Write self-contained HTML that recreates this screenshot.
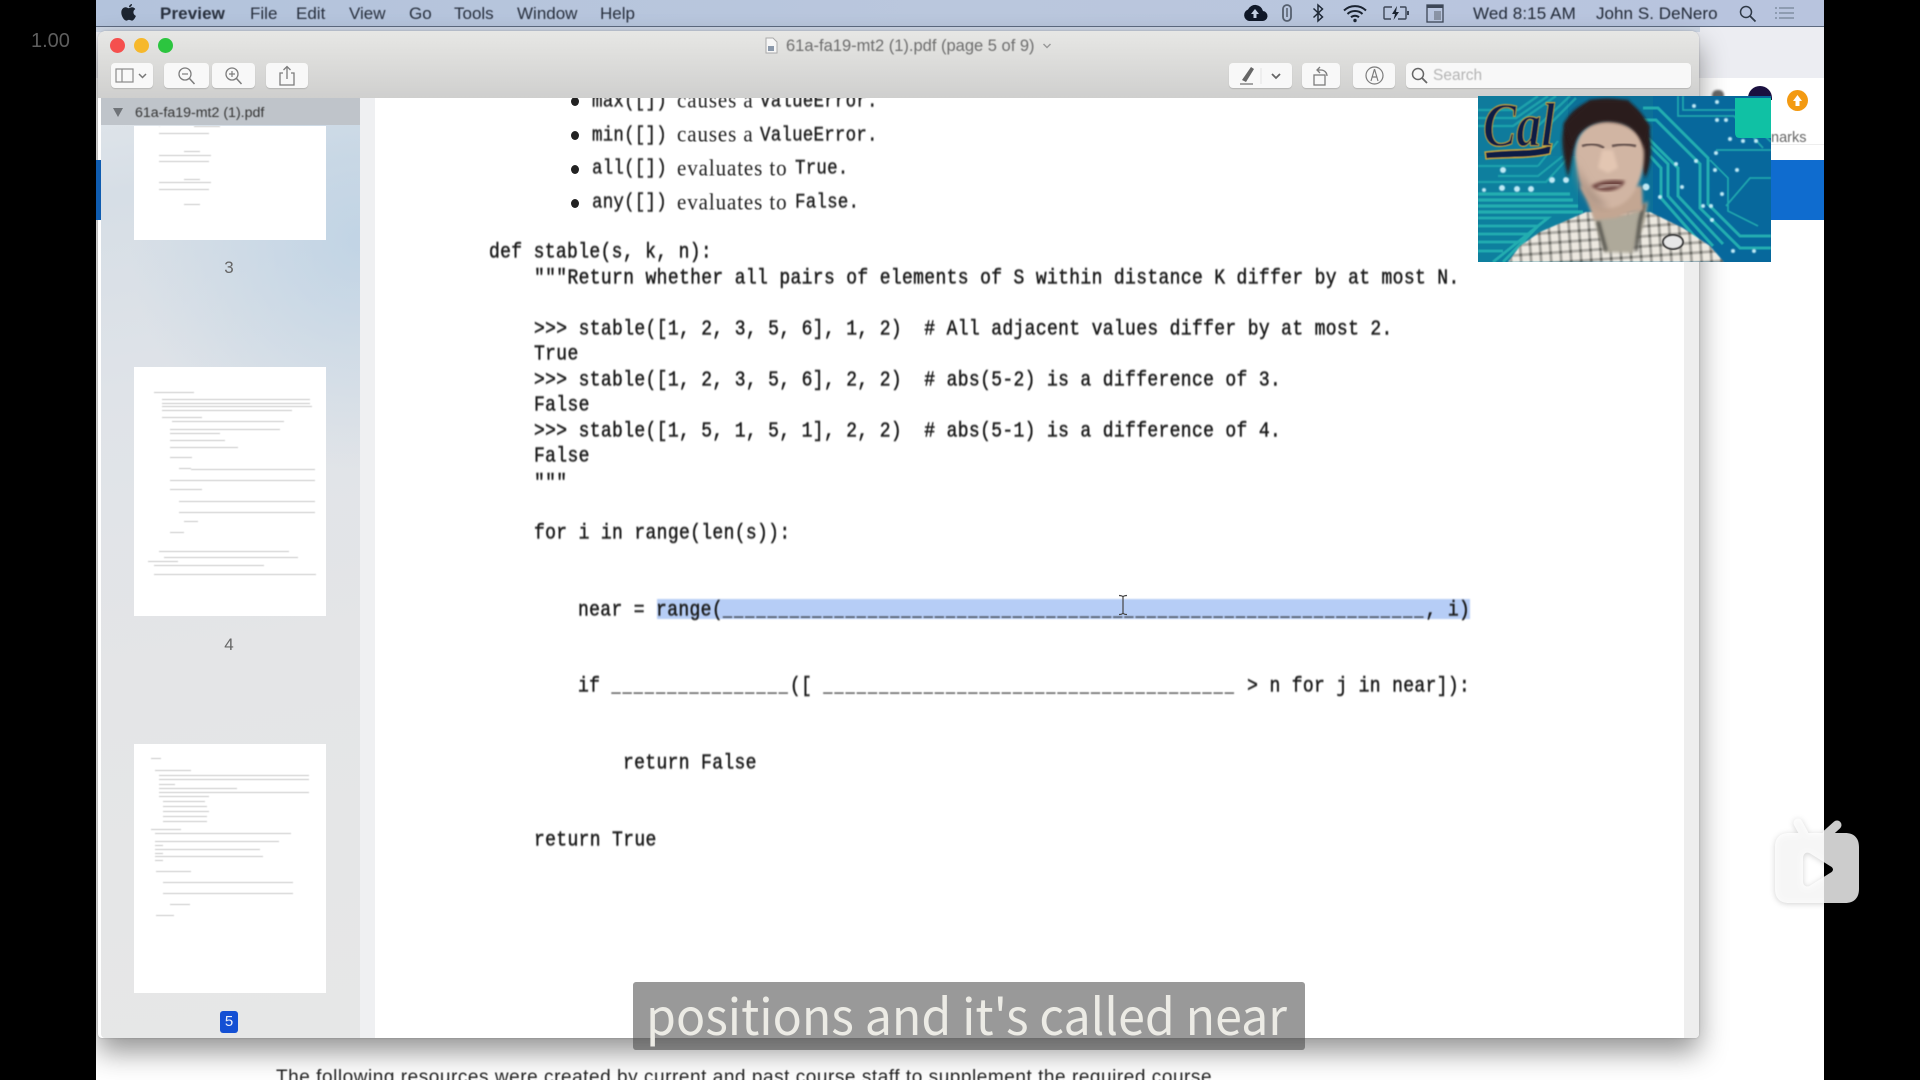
<!DOCTYPE html>
<html><head><meta charset="utf-8"><style>
html,body{margin:0;padding:0;width:1920px;height:1080px;overflow:hidden;background:#000}
*{box-sizing:border-box}
.a{position:absolute}
#v{position:absolute;left:96px;top:0;width:1728px;height:1080px;background:#fff;overflow:hidden}
#stage{position:absolute;left:-96px;top:0;width:1920px;height:1080px}
.m{position:absolute;top:3px;font:17px/22px "Liberation Sans",sans-serif;color:#28303e;white-space:nowrap;filter:blur(.5px)}
.btn{position:absolute;top:63px;height:25px;background:#f8f8f8;border-radius:4px;box-shadow:0 1px 1px rgba(0,0,0,.14)}
.c{position:absolute;font-family:"Liberation Mono",monospace;font-size:18px;letter-spacing:.35px;line-height:22px;color:#1c1c1c;white-space:pre;filter:blur(.6px);-webkit-text-stroke:.45px #1c1c1c;transform:scaleY(1.17);transform-origin:0 50%}
.u{font-size:15px;letter-spacing:2.150px;-webkit-text-stroke:.3px #1c1c1c}
.s{position:absolute;font-family:"Liberation Serif",serif;font-size:21px;letter-spacing:.9px;line-height:22px;color:#222;white-space:pre;filter:blur(.55px);transform:scaleY(1.1)}
.mi{position:absolute;font-family:"Liberation Mono",monospace;font-size:17.500px;letter-spacing:.2px;line-height:22px;color:#1c1c1c;white-space:pre;filter:blur(.6px);-webkit-text-stroke:.35px #1c1c1c;transform:scaleY(1.15)}
.b{position:absolute;left:571px;width:8px;height:9px;border-radius:50%;background:#222;filter:blur(.3px)}
.th{position:absolute;left:134px;width:192px;background:#fff;overflow:hidden}
.th i{position:absolute;display:block;height:1px!important;background:#777;opacity:.42!important;filter:blur(.5px)}
.n{position:absolute;font:16px/18px "Liberation Sans",sans-serif;color:#666;width:20px;text-align:center;left:219px;filter:blur(.3px)}
</style></head><body>
<div style="position:absolute;left:31px;top:30px;font:20px/22px 'Liberation Sans',sans-serif;color:#5e5e5e">1.00</div>
<div id="v"><div id="stage">

<!-- desktop behind window -->
<div class="a" style="left:96px;top:27px;width:1728px;height:51px;background:#ecedf2"></div>
<div class="a" style="left:96px;top:27px;width:1604px;height:5px;background:#cdd6e4"></div>
<div class="a" style="left:1700px;top:144px;width:124px;height:1px;background:#eee"></div>
<div class="a" style="left:1771px;top:160px;width:53px;height:60px;background:#0f6ccf"></div>
<div class="a" style="left:1771px;top:129px;font:14.500px/18px 'Liberation Sans',sans-serif;color:#666;filter:blur(.4px)">narks</div>
<div class="a" style="left:1787px;top:90px;width:21px;height:21px;border-radius:50%;background:#f39a12"></div>
<svg class="a" style="left:1790px;top:93px" width="15" height="15" viewBox="0 0 15 15"><path d="M7.500 2L12 8H9.500V13H5.500V8H3z" fill="#fff"/></svg>
<div class="a" style="left:1712px;top:90px;width:12px;height:8px;background:#666;border-radius:5px 5px 0 0;filter:blur(1px)"></div>
<div class="a" style="left:1748px;top:86px;width:24px;height:14px;background:#1a1040;border-radius:12px 12px 0 0"></div>

<!-- menu bar -->
<div class="a" style="left:96px;top:0;width:1728px;height:27px;background:linear-gradient(90deg,#b3c3dc,#bac7dd 50%,#b8c4de);border-bottom:1.500px solid #5d6a80"></div>
<svg class="a" style="left:120px;top:3px" width="17" height="20" viewBox="0 0 17 20"><path d="M12 1c.1 1.600-1.200 3.200-2.900 3.200C8.900 2.600 10.400 1.100 12 1zM8.700 5.200c.8 0 1.900-.9 3.300-.9 1.300 0 2.600.7 3.300 1.800-2.800 1.600-2.400 5.600.6 6.800-.6 1.700-2.200 4.700-3.900 4.700-1.100 0-1.500-.7-2.900-.7s-1.900.7-2.900.7C4.300 17.600 1.300 13.300 1.300 9.600c0-3.400 2.200-5.300 4.300-5.300 1.300 0 2.400.9 3.100.9z" fill="#1c2430"/></svg>
<div class="m" style="left:160px;font-weight:700;letter-spacing:.1px">Preview</div>
<div class="m" style="left:250px">File</div>
<div class="m" style="left:296px">Edit</div>
<div class="m" style="left:349px">View</div>
<div class="m" style="left:409px">Go</div>
<div class="m" style="left:454px">Tools</div>
<div class="m" style="left:517px">Window</div>
<div class="m" style="left:600px">Help</div>
<svg class="a" style="left:1242px;top:3px" width="26" height="20" viewBox="0 0 26 20"><path d="M7 18h13a5 5 0 0 0 1-10A8 8 0 0 0 6 6.500 6 6 0 0 0 7 18z" fill="#101828"/><path d="M13 6l4 5h-2.500v4h-3v-4H9z" fill="#c3cfe2"/></svg>
<svg class="a" style="left:1280px;top:3px" width="14" height="20" viewBox="0 0 14 20"><rect x="3" y="2" width="8" height="16" rx="4" fill="none" stroke="#56606f" stroke-width="1.800"/><path d="M7 5v9" stroke="#56606f" stroke-width="1.500"/></svg>
<svg class="a" style="left:1311px;top:3px" width="14" height="20" viewBox="0 0 14 20"><path d="M2.500 5.500l9 8.500L7 18V2l4.500 4-9 8.500" fill="none" stroke="#1e2836" stroke-width="1.500"/></svg>
<svg class="a" style="left:1342px;top:3px" width="26" height="20" viewBox="0 0 26 20"><path d="M2 7.500a16 16 0 0 1 22 0M5.500 11a11 11 0 0 1 15 0M9 14.300a6 6 0 0 1 8 0" fill="none" stroke="#1a2330" stroke-width="2"/><circle cx="13" cy="17.500" r="1.700" fill="#1a2330"/></svg>
<svg class="a" style="left:1382px;top:3px" width="28" height="20" viewBox="0 0 28 20"><path d="M10 4H3a1 1 0 0 0-1 1v10a1 1 0 0 0 1 1h6M18 4h5a1 1 0 0 1 1 1v10a1 1 0 0 1-1 1h-7" fill="none" stroke="#3d4757" stroke-width="1.400"/><path d="M15 3l-5 8h3l-1.500 6 5.500-8h-3z" fill="#1a2330"/><rect x="25" y="8" width="2" height="4" fill="#3d4757"/></svg>
<svg class="a" style="left:1425px;top:3px" width="20" height="20" viewBox="0 0 20 20"><rect x="2" y="2" width="16" height="17" fill="none" stroke="#3d4757" stroke-width="1.300"/><rect x="2" y="2" width="16" height="3" fill="#3d4757"/><rect x="9" y="8" width="7" height="9" fill="#8a94a5"/></svg>
<div class="m" style="left:1473px;color:#222a38;letter-spacing:.1px">Wed 8:15 AM</div>
<div class="m" style="left:1596px;color:#222a38;letter-spacing:.05px">John S. DeNero</div>
<svg class="a" style="left:1738px;top:4px" width="19" height="19" viewBox="0 0 19 19"><circle cx="8" cy="8" r="5.500" fill="none" stroke="#2f3947" stroke-width="1.500"/><path d="M12 12l5.500 5.500" stroke="#2f3947" stroke-width="1.800"/></svg>
<svg class="a" style="left:1774px;top:4px" width="22" height="18" viewBox="0 0 22 18"><path d="M5 4h15M5 9h15M5 14h15M1 4h2M1 9h2M1 14h2" stroke="#8896ab" stroke-width="1.700"/></svg>

<!-- window -->
<div class="a" style="left:98px;top:31px;width:1601px;height:1007px;background:#fff;border-radius:8px 8px 4px 4px;box-shadow:0 14px 28px rgba(0,0,0,.42),0 0 2px rgba(0,0,0,.2)">
  <div class="a" style="left:0;top:0;width:1601px;height:67px;background:linear-gradient(#e7e7e5,#dfdfdd 35%,#cfcfce);border-radius:8px 8px 0 0"></div>
  <div class="a" style="left:3px;top:67px;width:259px;height:940px;background:linear-gradient(170deg,#e0e5ea 0,#d6dee6 10%,#dfe3e8 30%,#e4e5e7 60%,#e6e7e7 100%);border-radius:0 0 0 4px"></div>
  <div class="a" style="left:3px;top:90px;width:259px;height:400px;background:radial-gradient(ellipse 230px 230px at 100% 30%,rgba(185,208,228,.75),rgba(185,208,228,0))"></div>
  <div class="a" style="left:3px;top:67px;width:259px;height:27px;background:#bfc4ca"></div>
  <div class="a" style="left:262px;top:67px;width:15px;height:940px;background:#eff0f2"></div>
  <div class="a" style="left:1586px;top:67px;width:15px;height:940px;background:#eeeeee;border-radius:0 0 4px 0"></div>
</div>
<div class="a" style="left:96px;top:160px;width:5px;height:60px;background:#0f5cb0"></div>

<!-- bottom text -->
<div class="a" style="left:276px;top:1068px;font:19px/20px 'Liberation Sans',sans-serif;color:#222;white-space:nowrap;filter:blur(.4px);letter-spacing:.54px">The following resources were created by current and past course staff to supplement the required course</div>

<!-- traffic lights -->
<div class="a" style="left:109.500px;top:38px;width:15px;height:15px;border-radius:50%;background:#f5504e"></div>
<div class="a" style="left:133.500px;top:38px;width:15px;height:15px;border-radius:50%;background:#f6b82c"></div>
<div class="a" style="left:157.500px;top:38px;width:15px;height:15px;border-radius:50%;background:#2cc53f"></div>

<!-- title -->
<svg class="a" style="left:765px;top:37px" width="13" height="17" viewBox="0 0 13 17"><path d="M1 1h7l4 4v11H1z" fill="#f6f6f6" stroke="#aaa"/><rect x="3" y="9" width="6" height="5" fill="#8a98aa"/></svg>
<div class="a" style="left:786px;top:37px;font:16.500px/18px 'Liberation Sans',sans-serif;color:#6e6e6e;white-space:nowrap;filter:blur(.4px)">61a-fa19-mt2 (1).pdf (page 5 of 9)</div>
<svg class="a" style="left:1042px;top:42px" width="10" height="8" viewBox="0 0 10 8"><path d="M1.500 2l3.500 3.500L8.500 2" fill="none" stroke="#9a9a9a" stroke-width="1.500"/></svg>

<!-- toolbar left -->
<div class="btn" style="left:111px;width:42px"></div>
<svg class="a" style="left:114px;top:67px" width="34" height="17" viewBox="0 0 34 17"><rect x="2" y="2" width="17" height="13" fill="none" stroke="#8a8a8a" stroke-width="1.200"/><path d="M8 2v13" stroke="#8a8a8a" stroke-width="1.200"/><path d="M25 7l3.500 3.500L32 7" fill="none" stroke="#777" stroke-width="1.500"/></svg>
<div class="btn" style="left:164px;width:45px"></div>
<div class="btn" style="left:212px;width:43px"></div>
<svg class="a" style="left:176px;top:66px" width="22" height="20" viewBox="0 0 22 20"><circle cx="9" cy="8" r="6" fill="none" stroke="#7c7c7c" stroke-width="1.300"/><path d="M13.500 12.500l5 5.500" stroke="#7c7c7c" stroke-width="1.500"/><path d="M6 8h6" stroke="#7c7c7c" stroke-width="1.200"/></svg>
<svg class="a" style="left:223px;top:66px" width="22" height="20" viewBox="0 0 22 20"><circle cx="9" cy="8" r="6" fill="none" stroke="#7c7c7c" stroke-width="1.300"/><path d="M13.500 12.500l5 5.500" stroke="#7c7c7c" stroke-width="1.500"/><path d="M6 8h6M9 5v6" stroke="#7c7c7c" stroke-width="1.200"/></svg>
<div class="btn" style="left:266px;width:42px"></div>
<svg class="a" style="left:278px;top:65px" width="18" height="22" viewBox="0 0 18 22"><path d="M5 8H2v12h14V8h-3" fill="none" stroke="#7c7c7c" stroke-width="1.300"/><path d="M9 14V2M5.500 5L9 1.500 12.500 5" fill="none" stroke="#7c7c7c" stroke-width="1.300"/></svg>

<!-- toolbar right -->
<div class="btn" style="left:1229px;width:63px"></div>
<svg class="a" style="left:1238px;top:65px" width="52" height="21" viewBox="0 0 52 21"><path d="M4 15L13 2l3 2-8 13z" fill="#666"/><path d="M2 19h13" stroke="#888" stroke-width="1.500"/><path d="M23 3v16" stroke="#e5e5e5"/><path d="M34 9l4 4 4-4" fill="none" stroke="#666" stroke-width="1.800"/></svg>
<div class="btn" style="left:1302px;width:38px"></div>
<svg class="a" style="left:1310px;top:65px" width="22" height="21" viewBox="0 0 22 21"><rect x="4" y="10" width="11" height="10" fill="none" stroke="#7c7c7c" stroke-width="1.300"/><path d="M8 5h3a6 6 0 0 1 6 6M10 2L7 5l3 3" fill="none" stroke="#7c7c7c" stroke-width="1.300"/></svg>
<div class="btn" style="left:1353px;width:42px"></div>
<svg class="a" style="left:1364px;top:65px" width="21" height="21" viewBox="0 0 21 21"><circle cx="10.500" cy="10.500" r="8.500" fill="none" stroke="#7c7c7c" stroke-width="1.200"/><path d="M10.500 4L7 16M10.500 4l3.500 12M8 12h5" fill="none" stroke="#7c7c7c" stroke-width="1.200"/></svg>
<div class="btn" style="left:1406px;width:285px"></div>
<svg class="a" style="left:1410px;top:66px" width="19" height="19" viewBox="0 0 19 19"><circle cx="8" cy="8" r="5.500" fill="none" stroke="#666" stroke-width="1.500"/><path d="M12 12l5 5" stroke="#666" stroke-width="1.800"/></svg>
<div class="a" style="left:1433px;top:66.500px;font:15.500px/18px 'Liberation Sans',sans-serif;color:#b4b4b4;filter:blur(.4px)">Search</div>

<!-- sidebar -->
<svg class="a" style="left:112px;top:107px" width="12" height="11" viewBox="0 0 12 11"><path d="M1 1h10L6 10z" fill="#6f7378"/></svg>
<div class="a" style="left:135px;top:103.500px;font:14.200px/18px 'Liberation Sans',sans-serif;color:#353535;white-space:nowrap;filter:blur(.4px)">61a-fa19-mt2 (1).pdf</div>

<div class="th" style="top:126px;height:114px">
  <i style="left:25px;top:0;width:1px;height:82px;background:#ccc"></i><i style="left:60px;top:0;width:26px"></i>
  <i style="left:25px;top:7px;width:50px"></i>
  <i style="left:25px;top:29px;width:52px"></i><i style="left:50px;top:25px;width:16px"></i>
  <i style="left:25px;top:35px;width:50px"></i>
  <i style="left:50px;top:53px;width:16px"></i><i style="left:25px;top:56px;width:52px"></i>
  <i style="left:25px;top:63px;width:50px"></i>
  <i style="left:50px;top:78px;width:16px"></i>
</div>
<div class="n" style="top:259px;font-size:17px">3</div>

<div class="th" style="top:367px;height:249px">
  <i style="left:20px;top:25px;width:40px"></i>
  <i style="left:28px;top:32px;width:148px"></i><i style="left:28px;top:36px;width:148px"></i><i style="left:28px;top:39px;width:150px"></i><i style="left:28px;top:43px;width:130px"></i>
  <i style="left:28px;top:50px;width:40px"></i><i style="left:38px;top:54px;width:112px"></i>
  <i style="left:36px;top:62px;width:110px"></i><i style="left:36px;top:66px;width:50px"></i>
  <i style="left:36px;top:73px;width:55px"></i><i style="left:36px;top:80px;width:68px"></i>
  <i style="left:36px;top:90px;width:22px"></i>
  <i style="left:45px;top:101px;width:12px"></i><i style="left:57px;top:102px;width:124px"></i>
  <i style="left:36px;top:113px;width:145px"></i>
  <i style="left:36px;top:122px;width:32px"></i>
  <i style="left:45px;top:134px;width:136px"></i><i style="left:45px;top:145px;width:136px"></i>
  <i style="left:50px;top:154px;width:14px"></i><i style="left:36px;top:165px;width:14px"></i>
  <i style="left:25px;top:184px;width:130px"></i><i style="left:30px;top:190px;width:134px"></i>
  <i style="left:14px;top:194px;width:30px"></i><i style="left:20px;top:198px;width:110px"></i>
  <i style="left:20px;top:207px;width:162px"></i>
</div>
<div class="n" style="top:636px;font-size:17px">4</div>

<div class="th" style="top:744px;height:249px">
  <i style="left:17px;top:14px;width:10px"></i>
  <i style="left:21px;top:26px;width:36px"></i>
  <i style="left:25px;top:31px;width:150px"></i><i style="left:25px;top:35px;width:150px"></i><i style="left:25px;top:40px;width:16px"></i>
  <i style="left:25px;top:44px;width:78px"></i><i style="left:25px;top:48px;width:150px"></i><i style="left:25px;top:52px;width:50px"></i>
  <i style="left:29px;top:57px;width:42px"></i><i style="left:29px;top:62px;width:44px"></i><i style="left:29px;top:67px;width:46px"></i><i style="left:29px;top:72px;width:44px"></i><i style="left:29px;top:77px;width:44px"></i>
  <i style="left:17px;top:85px;width:30px"></i><i style="left:21px;top:89px;width:136px"></i>
  <i style="left:21px;top:97px;width:124px"></i><i style="left:21px;top:101px;width:8px"></i><i style="left:21px;top:105px;width:105px"></i><i style="left:21px;top:109px;width:8px"></i><i style="left:21px;top:112px;width:108px"></i><i style="left:21px;top:116px;width:8px"></i>
  <i style="left:22px;top:127px;width:35px"></i>
  <i style="left:29px;top:138px;width:130px"></i><i style="left:29px;top:149px;width:130px"></i>
  <i style="left:36px;top:160px;width:20px"></i><i style="left:22px;top:171px;width:18px"></i>
</div>
<div class="a" style="left:220px;top:1011px;width:18px;height:22px;background:#1450d4;border-radius:3px;color:#e8eefc;font:15px/22px 'Liberation Sans',sans-serif;text-align:center;filter:blur(.3px)">5</div>

<!-- page content -->
<div class="a" style="left:375px;top:98px;width:1000px;height:14px;overflow:hidden">
  <div class="b" style="left:196px;top:-1px"></div>
  <div class="mi" style="left:217px;top:-7px">max([])</div>
  <div class="s" style="left:302px;top:-9px">causes a</div>
  <div class="mi" style="left:385px;top:-7px">ValueError.</div>
</div>
<div class="b" style="top:131px"></div><div class="mi" style="left:592px;top:125px">min([])</div><div class="s" style="left:677px;top:123px">causes a</div><div class="mi" style="left:760px;top:125px">ValueError.</div>
<div class="b" style="top:165px"></div><div class="mi" style="left:592px;top:158px">all([])</div><div class="s" style="left:677px;top:157px">evaluates to</div><div class="mi" style="left:795px;top:158px">True.</div>
<div class="b" style="top:199px"></div><div class="mi" style="left:592px;top:192px">any([])</div><div class="s" style="left:677px;top:191px">evaluates to</div><div class="mi" style="left:795px;top:192px">False.</div>

<div class="a" style="left:657px;top:599px;width:813px;height:20px;background:#b6cdf6;filter:blur(.7px)"></div>

<div class="c" style="left:489px;top:242px">def stable(s, k, n):</div>
<div class="c" style="left:534px;top:268px">"""Return whether all pairs of elements of S within distance K differ by at most N.</div>
<div class="c" style="left:534px;top:319px">&gt;&gt;&gt; stable([1, 2, 3, 5, 6], 1, 2)  # All adjacent values differ by at most 2.</div>
<div class="c" style="left:534px;top:344px">True</div>
<div class="c" style="left:534px;top:370px">&gt;&gt;&gt; stable([1, 2, 3, 5, 6], 2, 2)  # abs(5-2) is a difference of 3.</div>
<div class="c" style="left:534px;top:395px">False</div>
<div class="c" style="left:534px;top:421px">&gt;&gt;&gt; stable([1, 5, 1, 5, 1], 2, 2)  # abs(5-1) is a difference of 4.</div>
<div class="c" style="left:534px;top:446px">False</div>
<div class="c" style="left:534px;top:473px">"""</div>
<div class="c" style="left:534px;top:523px">for i in range(len(s)):</div>
<div class="c" style="left:578px;top:600px">near = range(<span class="u">_______________________________________________________________</span>, i)</div>
<div class="c" style="left:578px;top:676px">if <span class="u">________________</span>([ <span class="u">_____________________________________</span> &gt; n for j in near]):</div>
<div class="c" style="left:623px;top:753px">return False</div>
<div class="c" style="left:534px;top:830px">return True</div>

<svg class="a" style="left:1117px;top:594px" width="12" height="22" viewBox="0 0 12 22"><path d="M2 1.500c2 0 3.500.5 4 1.500.5-1 2-1.500 4-1.500M6 3v16M2 20.500c2 0 3.500-.5 4-1.500.5 1 2 1.500 4 1.500" fill="none" stroke="#444" stroke-width="1.200"/></svg>

<!-- webcam -->
<svg class="a" style="left:1478px;top:96px" width="293" height="166" viewBox="0 0 293 166">
  <defs>
    <pattern id="pl" width="10" height="10" patternUnits="userSpaceOnUse" patternTransform="rotate(-4)">
      <rect width="10" height="10" fill="#ece8e0"/>
      <rect width="3" height="10" fill="#a6a49e"/>
      <rect width="10" height="3" fill="#aeaca6"/>
      <rect width="3" height="3" fill="#6a6a64"/>
    </pattern>
    <filter id="bl"><feGaussianBlur stdDeviation="1.500"/></filter>
    <filter id="bl2"><feGaussianBlur stdDeviation=".6"/></filter>
    <filter id="bl1"><feGaussianBlur stdDeviation=".8"/></filter>
    <filter id="bl3"><feGaussianBlur stdDeviation="4"/></filter>
  </defs>
  <rect width="293" height="166" fill="#0c7098"/>
  <rect x="0" y="60" width="100" height="106" fill="#0e7f9e"/>
  <rect x="0" y="0" width="90" height="60" fill="#0f7b9c"/>
  <rect x="175" y="0" width="118" height="166" fill="#07689c"/>
  <g fill="none" stroke="#22adb0" filter="url(#bl2)">
    <path d="M0 14H40L60 0M0 22H38L70 0M0 30H35L78 0M60 30L92 0M70 30L98 2" stroke-width="2.500" opacity=".75"/>
    <path d="M0 98H92M0 104H95M0 110H100M0 116H105" stroke-width="3.200"/>
    <path d="M0 122H70L15 166M0 130H60L25 166M0 138H50L35 166M0 146H40M0 155H25" stroke-width="2.800"/>
    <path d="M165 12H180L230 62V108L262 140H293M160 24H178L222 68V112L262 152H293M172 50L190 68V100L235 150M172 60L183 72V102L225 150M170 42L200 72V100L245 148" stroke-width="3"/>
    <path d="M205 0V14H260L293 46M200 0V20H256L285 52M238 54H293M232 64L250 82V115L280 130M248 110L272 82H293" stroke-width="1.800" opacity=".9"/>
    <path d="M0 70H60M20 80L60 80 85 60M60 70L80 45M0 86H68L90 62" stroke-width="2.200" opacity=".75"/>
  </g>
  <g fill="#bfe9f5" filter="url(#bl1)">
    <circle cx="25" cy="74" r="3"/><circle cx="24" cy="92" r="3"/><circle cx="39" cy="93" r="3"/><circle cx="53" cy="93" r="3"/><circle cx="74" cy="84" r="3"/><circle cx="88" cy="84" r="3"/><circle cx="168" cy="91" r="3.500"/><circle cx="6" cy="94" r="2"/><circle cx="252" cy="43" r="2"/><circle cx="265" cy="45" r="2"/><circle cx="278" cy="45" r="2"/><circle cx="237" cy="74" r="2"/><circle cx="259" cy="74" r="2"/><circle cx="244" cy="98" r="2"/><circle cx="204" cy="91" r="2"/><circle cx="182" cy="101" r="2"/><circle cx="238" cy="57" r="2"/><circle cx="239" cy="24" r="2"/><circle cx="248" cy="24" r="2"/><circle cx="216" cy="10" r="2"/><circle cx="239" cy="6" r="2"/><circle cx="255" cy="155" r="2"/><circle cx="276" cy="155" r="2"/><circle cx="225" cy="110" r="2"/><circle cx="233" cy="110" r="2"/><circle cx="234" cy="124" r="2"/><circle cx="218" cy="65" r="2"/><circle cx="198" cy="68" r="2"/>
  </g>
  <!-- Cal logo -->
  <g filter="url(#bl2)">
    <path d="M7 56C40 52 58 56 74 48L72 58C50 63 30 61 8 63z" fill="#101d44" stroke="#c9a83f" stroke-width="1.300"/>
    <text x="5" y="50" font-family="Liberation Serif,serif" font-style="italic" font-weight="700" font-size="62" fill="#101d44" stroke="#c9a83f" stroke-width=".9" textLength="72" lengthAdjust="spacingAndGlyphs">Cal</text>
  </g>
  <!-- person -->
  <path d="M30 166L42 150 62 136 108 116 172 116 205 132 232 150 246 166z" fill="url(#pl)" filter="url(#bl1)"/>
  <path d="M115 110L118 130 126 156 155 157 167 125 170 105 150 118 128 118z" fill="#aea99a" filter="url(#bl)"/>
  <path d="M120 125L128 155M166 108L162 125 158 155" fill="none" stroke="#45443f" stroke-width="3" filter="url(#bl)"/>
  <ellipse cx="195" cy="146" rx="10" ry="7" fill="#e7e7e7" stroke="#3a3a3a" stroke-width="2" filter="url(#bl2)"/>
  <path d="M108 102L116 124 137 122 165 114 164 90 102 90z" fill="#c3a692" filter="url(#bl)"/>
  <path d="M90 82C86 62 82 46 86 30 92 10 115 2 132 3 152 4 166 14 171 36 175 55 172 72 167 82 160 60 158 38 150 28 130 20 110 24 100 40 95 52 94 65 90 82z" fill="#291a1d" filter="url(#bl)"/>
  <path d="M97 60C97 36 112 24 132 24 150 24 164 36 166 56 167 85 152 112 130 112 110 112 100 90 97 60z" fill="#d1b5a3" filter="url(#bl)"/>
  <path d="M97 64C100 90 110 112 130 112 120 100 105 90 97 64z" fill="#a78f80" filter="url(#bl3)"/>
  <path d="M94 52C97 34 115 25 132 26 150 27 162 36 167 52L172 30 150 4 112 4 86 28z" fill="#291a1d" filter="url(#bl)"/>
  <path d="M103 56H126M136 56H158" fill="none" stroke="#8f7a72" stroke-width="5" filter="url(#bl1)" opacity=".6"/>
  <path d="M104 50C112 47 120 48 126 52M134 50C142 48 150 48 158 50" fill="none" stroke="#6a5651" stroke-width="2.500" filter="url(#bl1)"/>
  <path d="M124 54L120 72 130 77 140 72 135 54z" fill="#e3c6b2" filter="url(#bl)"/>
  <path d="M113 90C122 84 136 83 147 85 144 95 124 99 113 90z" fill="#6e4441" filter="url(#bl)"/>
  <path d="M120 92C128 89 136 88 142 89" stroke="#e9d9cc" stroke-width="2" fill="none" filter="url(#bl)"/>
  <!-- overlay square -->
  <path d="M257 2H293V42H262Q257 42 257 37z" fill="#10c1a4"/>
</svg>

<!-- caption -->
<div class="a" style="left:633px;top:982px;width:672px;height:68px;background:rgba(70,70,70,.55);border-radius:3px"></div>
<svg class="a" style="left:633px;top:982px" width="672" height="68"><text x="13" y="53" font-family="Noto Sans CJK SC,Liberation Sans,sans-serif" font-size="50" font-weight="400" fill="#ecebe5" textLength="641" lengthAdjust="spacingAndGlyphs">positions and it's called near</text></svg>

</div></div>

<!-- player logo spanning the video edge -->
<svg class="a" style="left:1765px;top:815px;filter:drop-shadow(0 1px 3px rgba(0,0,0,.22))" width="105" height="100" viewBox="0 0 105 100"><g opacity=".8"><path d="M33 8L39 19M72 10L62 19" stroke="#fff" stroke-width="9" stroke-linecap="round" fill="none"/><path fill-rule="evenodd" fill="#fff" d="M24 18H80C89 18 94 23 94 32V74C94 83 89 88 80 88H24C15 88 10 83 10 74V32C10 23 15 18 24 18zM38 44C38 38 42 36 46 39L65 51C69 53 69 56 65 58L46 70C42 73 38 71 38 66z"/></g></svg>
</body></html>
